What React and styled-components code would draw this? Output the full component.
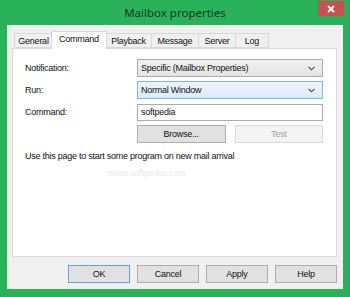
import React from "react";
import styled, { createGlobalStyle } from "styled-components";

const GlobalStyle = createGlobalStyle`
  html, body {
    margin: 0;
    padding: 0;
    width: 350px;
    height: 297px;
    overflow: hidden;
    background: #29b25a;
  }
`;

const Window = styled.div`
  width: 350px;
  height: 297px;
  box-sizing: border-box;
  background: #29b25a;
  display: flex;
  flex-direction: column;
  font-family: "Liberation Sans", Arial, sans-serif;
  font-size: 9px;
  letter-spacing: -0.25px;
  color: #111;
`;

const TitleBar = styled.div`
  position: relative;
  height: 25px;
  flex-shrink: 0;
  display: flex;
  align-items: center;
  justify-content: center;
  padding-bottom: 1px;
  box-sizing: border-box;
`;

const Title = styled.span`
  font-family: "Noto Sans", "Open Sans", sans-serif;
  font-size: 11.5px;
  letter-spacing: 0;
  color: #1d3524;
`;

const CloseButton = styled.div`
  position: absolute;
  top: 1px;
  right: 6px;
  width: 26px;
  height: 15px;
  background: #c75050;
  display: flex;
  align-items: center;
  justify-content: center;
`;

const Client = styled.div`
  flex: 1;
  margin: 0 7px 8px 7px;
  background: #f0f0f0;
  display: flex;
  flex-direction: column;
  padding: 6px 6px 0 5px;
`;

const TabRow = styled.div`
  height: 17px;
  display: flex;
  align-items: flex-end;
  padding-left: 2px;
  position: relative;
  z-index: 1;
`;

const Tab = styled.div`
  box-sizing: border-box;
  width: ${({ w }) => w}px;
  height: ${({ active }) => (active ? 18 : 15)}px;
  margin-left: ${({ active }) => (active ? -2 : -1)}px;
  margin-right: ${({ active }) => (active ? -1 : 0)}px;
  margin-bottom: ${({ active }) => (active ? -1 : 0)}px;
  border: 1px solid #d9d9d9;
  border-bottom: ${({ active }) => (active ? "none" : "1px solid #d9d9d9")};
  background: ${({ active }) => (active ? "#fff" : "#f0f0f0")};
  position: relative;
  z-index: ${({ active }) => (active ? 2 : 1)};
  display: flex;
  justify-content: center;
  padding-top: 2px;
  line-height: 11px;
  &:first-child {
    margin-left: 0;
  }
`;

const Panel = styled.div`
  flex: 1;
  background: #fff;
  border: 1px solid #d9d9d9;
  padding: 10px 13px 0 12px;
  position: relative;
`;

const Form = styled.div`
  display: grid;
  grid-template-columns: 112px 1fr;
  grid-auto-rows: 18px;
  row-gap: 4px;
  align-items: center;
`;

const Label = styled.div`
  line-height: 18px;
`;

const Select = styled.div`
  box-sizing: border-box;
  height: 18px;
  border: 1px solid ${({ focused }) => (focused ? "#7eb4ea" : "#acacac")};
  background: ${({ focused }) =>
    focused
      ? "linear-gradient(#ecf4fc, #dcecfc)"
      : "linear-gradient(#f0f0f0, #e5e5e5)"};
  display: flex;
  align-items: center;
  justify-content: space-between;
  padding: 0 7px 0 3px;
`;

const Input = styled.div`
  box-sizing: border-box;
  height: 17px;
  border: 1px solid #abadb3;
  background: #fff;
  display: flex;
  align-items: center;
  padding: 0 3px;
`;

const ButtonPair = styled.div`
  grid-column: 2;
  display: grid;
  grid-template-columns: 1fr 1fr;
  column-gap: 9px;
`;

const Button = styled.div`
  box-sizing: border-box;
  height: 18px;
  width: ${({ w }) => (w ? `${w}px` : "auto")};
  border: 1px solid
    ${({ primary, disabled }) =>
      primary ? "#5fa0e6" : disabled ? "#d9d9d9" : "#adadad"};
  background: ${({ disabled }) => (disabled ? "#f4f4f4" : "#e1e1e1")};
  color: ${({ disabled }) => (disabled ? "#a3a3a3" : "#111")};
  display: flex;
  align-items: center;
  justify-content: center;
`;

const Note = styled.div`
  margin-top: 7px;
  line-height: 12px;
`;

const Watermark = styled.div`
  position: absolute;
  left: 95px;
  top: 119px;
  font-size: 9px;
  letter-spacing: 0;
  color: #e9e9e9;
`;

const Footer = styled.div`
  height: 32px;
  display: flex;
  justify-content: flex-end;
  align-items: flex-start;
  padding-top: 8px;
  box-sizing: border-box;
  gap: 7px;
`;

const Chevron = () => (
  <svg width="7" height="5" viewBox="0 0 7 5">
    <path d="M0.5 0.8 L3.5 3.8 L6.5 0.8" fill="none" stroke="#444" strokeWidth="1.1" />
  </svg>
);

const tabs = [
  { name: "General", w: 39 },
  { name: "Command", w: 56 },
  { name: "Playback", w: 47 },
  { name: "Message", w: 48 },
  { name: "Server", w: 38 },
  { name: "Log", w: 34 },
];

export default function App() {
  return (
    <>
      <GlobalStyle />
      <Window>
        <TitleBar>
          <Title>Mailbox properties</Title>
          <CloseButton>
            <svg width="8" height="8" viewBox="0 0 8 8">
              <path d="M1 1 L7 7 M7 1 L1 7" stroke="#fff" strokeWidth="1.8" />
            </svg>
          </CloseButton>
        </TitleBar>
        <Client>
          <TabRow>
            {tabs.map((t) => (
              <Tab key={t.name} w={t.w} active={t.name === "Command"}>
                {t.name}
              </Tab>
            ))}
          </TabRow>
          <Panel>
            <Form>
              <Label>Notification:</Label>
              <Select>
                <span>Specific (Mailbox Properties)</span>
                <Chevron />
              </Select>
              <Label>Run:</Label>
              <Select focused>
                <span>Normal Window</span>
                <Chevron />
              </Select>
              <Label>Command:</Label>
              <Input>softpedia</Input>
              <ButtonPair>
                <Button>Browse...</Button>
                <Button disabled>Test</Button>
              </ButtonPair>
            </Form>
            <Note>Use this page to start some program on new mail arrival</Note>
            <Watermark>www.softpedia.com</Watermark>
          </Panel>
          <Footer>
            <Button w={62} primary>OK</Button>
            <Button w={62}>Cancel</Button>
            <Button w={62}>Apply</Button>
            <Button w={62}>Help</Button>
          </Footer>
        </Client>
      </Window>
    </>
  );
}
